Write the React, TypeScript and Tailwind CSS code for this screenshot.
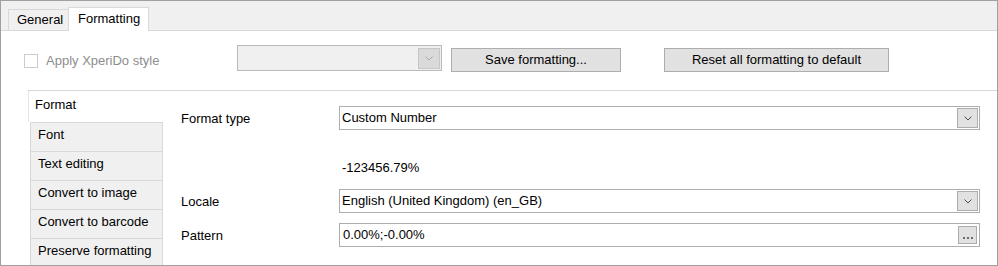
import React from 'react';

const Chevron = ({ color = '#4d4d4d' }: { color?: string }) => (
  <svg width="8" height="5" viewBox="0 0 8 5" fill="none">
    <polyline points="0.5,0.5 4,4 7.5,0.5" stroke={color} strokeWidth="1" />
  </svg>
);

const SIDE_TABS = ['Font', 'Text editing', 'Convert to image', 'Convert to barcode', 'Preserve formatting'];

function Combo({ value }: { value: string }) {
  return (
    <div className="flex-1 h-[24px] flex items-center justify-between border border-[#adadad] bg-white pl-[2px]">
      <span className="text-black">{value}</span>
      <div className="mr-[1px] w-[21px] h-[20px] flex items-center justify-center bg-[#e1e1e1] border border-[#adadad]">
        <Chevron />
      </div>
    </div>
  );
}

export default function App() {
  return (
    <div className="w-[998px] h-[266px] overflow-hidden bg-[#f0f0f0] border border-[#a0a0a0] flex flex-col font-['Liberation_Sans',Arial,sans-serif] text-[13px] text-black">
      {/* Top tabs */}
      <div className="h-[30px] shrink-0 flex items-end pl-[7px] border-b border-[#d9d9d9]">
        <div className="w-[60px] h-[21px] flex items-center pl-[8px] border-t border-l border-[#d9d9d9] bg-[#f0f0f0]">
          General
        </div>
        <div className="w-[81px] h-[24px] -mb-px flex items-center pl-[9px] pb-[2px] border-t border-l border-r border-[#d9d9d9] bg-white">
          Formatting
        </div>
      </div>

      {/* Tab page */}
      <div className="flex-1 bg-white flex flex-col">
        {/* Toolbar */}
        <div className="h-[59px] shrink-0 pt-[14px] pl-[23px] flex items-start">
          <div className="w-[213px] mt-[6px] flex items-center gap-[8px]">
            <div className="w-[14px] h-[14px] border border-[#cccccc] bg-white" />
            <span className="text-[#8d8d8d]">Apply XperiDo style</span>
          </div>
          <div className="w-[205px] h-[26px] flex items-center justify-end border border-[#b9b9b9] bg-[#f0f0f0]">
            <div className="mr-[1px] w-[22px] h-[21px] flex items-center justify-center bg-[#dadada] border border-[#c6c6c6]">
              <Chevron color="#a8a8a8" />
            </div>
          </div>
          <button className="ml-[9px] mt-[3px] w-[170px] h-[24px] bg-[#e1e1e1] border border-[#adadad]">
            Save formatting...
          </button>
          <button className="ml-[43px] mt-[3px] w-[225px] h-[24px] bg-[#e1e1e1] border border-[#adadad]">
            Reset all formatting to default
          </button>
        </div>

        {/* Vertical tab control */}
        <div className="flex-1 ml-[27px] border-t border-[#d9d9d9] flex">
          <div className="w-[135px] shrink-0 flex flex-col">
            <div className="h-[31px] shrink-0 flex items-center pl-[6px] pb-[3px] bg-white border-l border-[#e3e3e3]">
              Format
            </div>
            <div className="ml-[2px] flex flex-col border-t border-[#d9d9d9]">
              {SIDE_TABS.map((t) => (
                <div
                  key={t}
                  className="h-[29px] shrink-0 flex items-center pl-[7px] pb-[4px] bg-[#f0f0f0] border-l border-r border-b border-[#d9d9d9]"
                >
                  {t}
                </div>
              ))}
            </div>
          </div>

          <div className="flex-1 pl-[18px] pr-[17px] pt-[15px] flex flex-col">
            <div className="flex items-center h-[24px]">
              <span className="w-[158px] shrink-0 pt-[2px]">Format type</span>
              <Combo value="Custom Number" />
            </div>
            <div className="mt-[30px] h-[16px] flex items-center pl-[161px]">-123456.79%</div>
            <div className="mt-[13px] flex items-center h-[24px]">
              <span className="w-[158px] shrink-0 pt-[2px]">Locale</span>
              <Combo value="English (United Kingdom) (en_GB)" />
            </div>
            <div className="mt-[10px] flex items-center h-[24px]">
              <span className="w-[158px] shrink-0 pt-[2px]">Pattern</span>
              <div className="flex-1 h-[24px] flex items-center justify-between border border-[#adadad] bg-white pl-[3px]">
                <span>0.00%;-0.00%</span>
                <div className="mr-[2px] w-[19px] h-[18px] flex items-end justify-center pb-[4px] gap-[2px] bg-[#e1e1e1] border border-[#adadad]">
                  <span className="w-[2px] h-[2px] bg-[#6d6d6d]" />
                  <span className="w-[2px] h-[2px] bg-[#6d6d6d]" />
                  <span className="w-[2px] h-[2px] bg-[#6d6d6d]" />
                </div>
              </div>
            </div>
          </div>
        </div>
      </div>
    </div>
  );
}
